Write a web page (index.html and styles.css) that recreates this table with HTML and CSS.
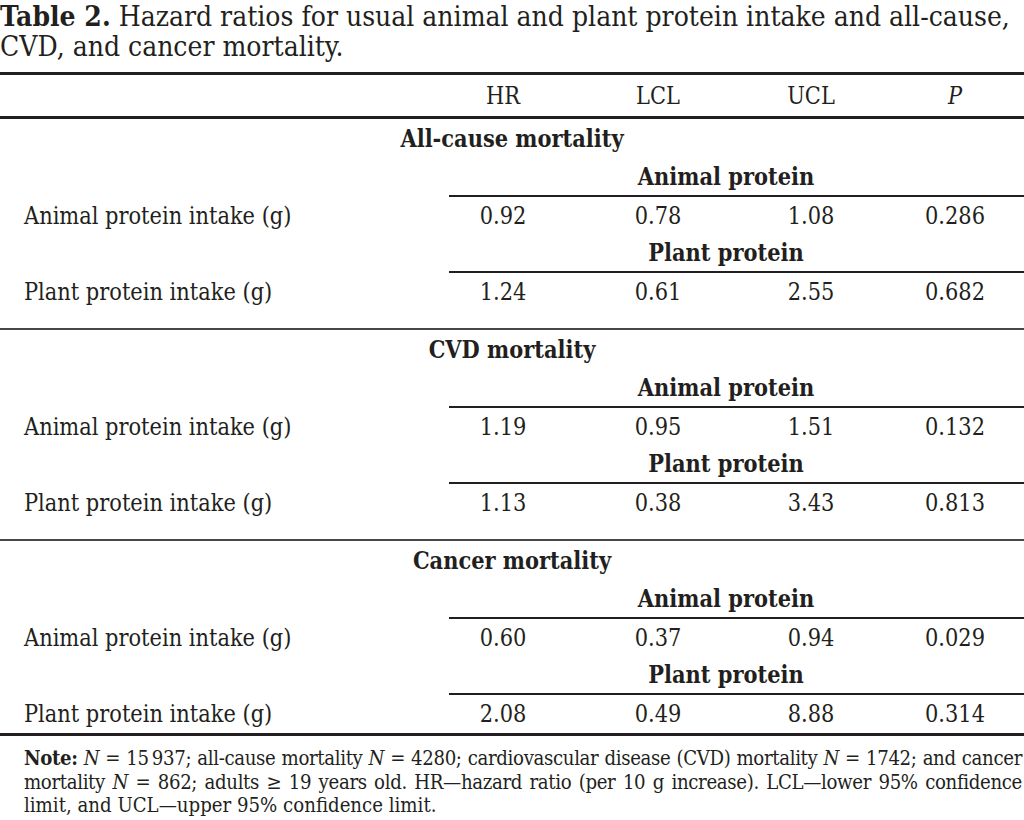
FILE: index.html
```html
<!DOCTYPE html>
<html lang="en">
<head>
<meta charset="utf-8">
<title>Table 2</title>
<link rel="stylesheet" href="styles.css">
</head>
<body>
<div class="page">
  <div class="caption">
    <span class="cap-line"><b>Table 2.</b> Hazard ratios for usual animal and plant protein intake and all-cause,</span>
    <span class="cap-line last">CVD, and cancer mortality.</span>
  </div>

  <div class="table">
    <div class="row head">
      <div class="label"></div>
      <div class="num">HR</div>
      <div class="num">LCL</div>
      <div class="num">UCL</div>
      <div class="num"><i>P</i></div>
    </div>

    <div class="section">
      <div class="sec-title">All-cause mortality</div>
      <div class="sub">Animal protein</div>
      <div class="row data">
        <div class="label">Animal protein intake (g)</div>
        <div class="num">0.92</div><div class="num">0.78</div><div class="num">1.08</div><div class="num">0.286</div>
      </div>
      <div class="sub">Plant protein</div>
      <div class="row data">
        <div class="label">Plant protein intake (g)</div>
        <div class="num">1.24</div><div class="num">0.61</div><div class="num">2.55</div><div class="num">0.682</div>
      </div>
    </div>

    <div class="section">
      <div class="sec-title">CVD mortality</div>
      <div class="sub">Animal protein</div>
      <div class="row data">
        <div class="label">Animal protein intake (g)</div>
        <div class="num">1.19</div><div class="num">0.95</div><div class="num">1.51</div><div class="num">0.132</div>
      </div>
      <div class="sub">Plant protein</div>
      <div class="row data">
        <div class="label">Plant protein intake (g)</div>
        <div class="num">1.13</div><div class="num">0.38</div><div class="num">3.43</div><div class="num">0.813</div>
      </div>
    </div>

    <div class="section final">
      <div class="sec-title">Cancer mortality</div>
      <div class="sub">Animal protein</div>
      <div class="row data">
        <div class="label">Animal protein intake (g)</div>
        <div class="num">0.60</div><div class="num">0.37</div><div class="num">0.94</div><div class="num">0.029</div>
      </div>
      <div class="sub">Plant protein</div>
      <div class="row data">
        <div class="label">Plant protein intake (g)</div>
        <div class="num">2.08</div><div class="num">0.49</div><div class="num">8.88</div><div class="num">0.314</div>
      </div>
    </div>
  </div>

  <div class="note">
    <span class="note-line tight"><b>Note:</b> <i>N</i> = 15&#8201;937; all-cause mortality <i>N</i> = 4280; cardiovascular disease (CVD) mortality <i>N</i> = 1742; and cancer</span>
    <span class="note-line tight">mortality <i>N</i> = 862; adults &#8805; 19 years old. HR&#8212;hazard ratio (per 10 g increase). LCL&#8212;lower 95% confidence</span>
    <span class="note-line last">limit, and UCL&#8212;upper 95% confidence limit.</span>
  </div>
</div>
</body>
</html>
```

FILE: styles.css
```css
html, body {
  margin: 0;
  padding: 0;
  background: #ffffff;
}

body {
  font-family: "DejaVu Serif Condensed", "DejaVu Serif", serif;
  font-stretch: condensed;
  color: #231f20;
}

.page {
  width: 1024px;
}

.caption {
  font-size: 28px;
  line-height: 30px;
  padding-top: 2px;
  height: 72px;
  box-sizing: border-box;
}

.cap-line {
  display: block;
  white-space: nowrap;
}

.table {
  border-top: 3px solid #231f20;
  border-bottom: 3px solid #231f20;
  font-size: 23.3px;
}

.row {
  display: grid;
  grid-template-columns: 426px 154px 156px 150px 138px;
  height: 38px;
  line-height: 38px;
}

.row.head {
  height: 41px;
  line-height: 41px;
  border-bottom: 3px solid #231f20;
}

.label {
  padding-left: 24px;
  white-space: nowrap;
}

.num {
  text-align: center;
}

.section {
  padding-bottom: 17px;
  border-bottom: 2px solid #4a4647;
}

.section.final {
  padding-bottom: 0;
  border-bottom: none;
}

.sec-title {
  height: 40px;
  line-height: 40px;
  text-align: center;
  font-weight: bold;
}

.sub {
  margin-left: 449px;
  padding-right: 21px;
  height: 36px;
  line-height: 36px;
  text-align: center;
  font-weight: bold;
  border-bottom: 2px solid #231f20;
}

.note {
  padding: 11px 2px 0 24px;
  font-size: 20.2px;
  line-height: 23.5px;
}

.note-line {
  display: block;
  text-align: justify;
  text-align-last: justify;
  white-space: nowrap;
}

.note-line.tight {
  letter-spacing: -0.35px;
}

.note-line.last {
  text-align: left;
  text-align-last: left;
}
```
